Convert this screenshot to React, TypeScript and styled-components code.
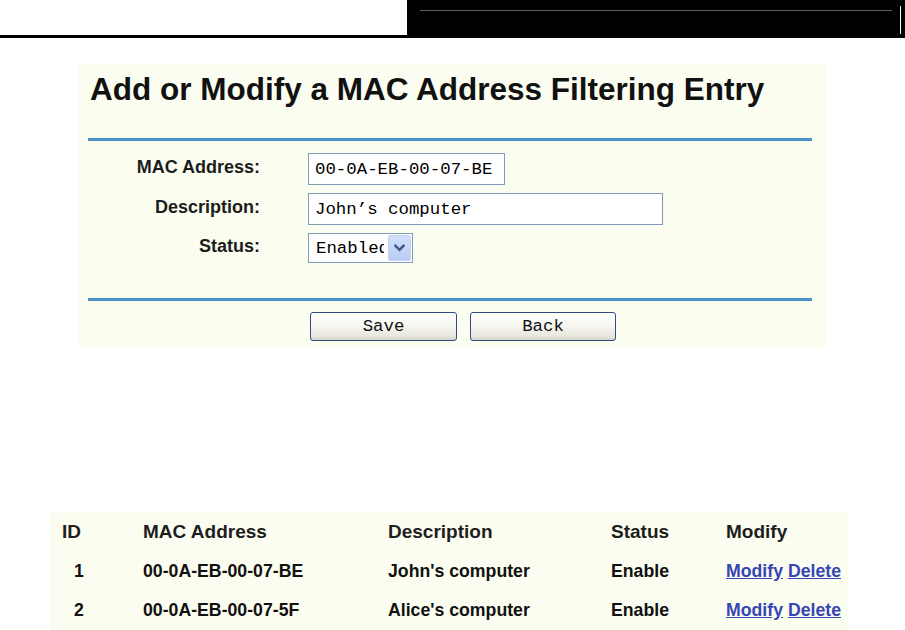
import React from "react";
import styled, { createGlobalStyle } from "styled-components";

const GlobalStyle = createGlobalStyle`
  html, body {
    margin: 0;
    padding: 0;
    background: #ffffff;
    font-family: "Liberation Sans", Arial, sans-serif;
  }
  * { box-sizing: border-box; }
`;

const CREAM = "#fbfdf0";
const BLUE = "#4a92c9";

const Page = styled.div`
  width: 905px;
  min-height: 630px;
  overflow: hidden;
`;

const Header = styled.header`
  display: flex;
  height: 38px;
`;

const HeaderLeft = styled.div`
  width: 407px;
  height: 38px;
  background: #ffffff;
  border-bottom: 3px solid #000000;
`;

const HeaderDark = styled.div`
  flex: 1;
  height: 38px;
  background: #000000;
  display: flex;
  align-items: flex-start;
  padding: 0 4px 0 13px;
`;

const HeaderRule = styled.div`
  flex: 1;
  margin-top: 10px;
  margin-right: 8px;
  border-top: 1px solid #5e5e5e;
`;

const HeaderTick = styled.div`
  width: 1px;
  height: 28px;
  margin-top: 6px;
  background: #ffffff;
`;

const FormPanel = styled.section`
  margin: 26px 0 0 78px;
  width: 748px;
  height: 284px;
  background: ${CREAM};
  padding-top: 7px;
`;

const Title = styled.h1`
  margin: 0 0 0 12px;
  font-family: "Liberation Sans", Arial, sans-serif;
  font-weight: bold;
  font-size: 31.5px;
  line-height: 36px;
  color: #111111;
`;

const Divider = styled.div<{ $mt: number }>`
  margin: ${(p) => p.$mt}px 0 0 10px;
  width: 724px;
  height: 3px;
  background: ${BLUE};
  box-shadow: 0 0 1px #9cc4e2;
`;

const FormBody = styled.div`
  display: flex;
  flex-direction: column;
  gap: 8px;
  padding-top: 12px;
`;

const Row = styled.div`
  display: flex;
  align-items: center;
`;

const Label = styled.label`
  width: 182px;
  margin-right: 48px;
  padding-bottom: 4px;
  text-align: right;
  font-weight: bold;
  font-size: 18px;
  color: #1c1c1c;
`;

const TextInput = styled.input<{ $w: number }>`
  width: ${(p) => p.$w}px;
  height: 32px;
  border: 1px solid #7f9db9;
  background: #ffffff;
  padding: 0 6px;
  font-family: "Liberation Mono", "Courier New", monospace;
  font-size: 17.4px;
  color: #000000;
  outline: none;
`;

const SelectBox = styled.div`
  width: 105px;
  height: 30px;
  border: 1px solid #7f9db9;
  background: #ffffff;
  padding: 1px;
  display: flex;
  align-items: stretch;
`;

const NativeSelect = styled.select`
  flex: 1;
  min-width: 0;
  appearance: none;
  -webkit-appearance: none;
  border: 0;
  background: transparent;
  padding: 0 4px 0 6px;
  font-family: "Liberation Mono", "Courier New", monospace;
  font-size: 17.4px;
  color: #000000;
  outline: none;
`;

const ArrowButton = styled.div`
  width: 23px;
  border-radius: 2px;
  background: linear-gradient(#d3e0fc, #b9cbf4);
  border: 1px solid #c6d4f4;
  display: flex;
  align-items: center;
  justify-content: center;
`;

const ButtonRow = styled.div`
  display: flex;
  gap: 13px;
  margin-top: 11px;
  padding-left: 232px;
`;

const Button = styled.button<{ $w: number }>`
  width: ${(p) => p.$w}px;
  height: 29px;
  border: 1px solid #2f4c7e;
  border-radius: 3px;
  background: linear-gradient(#ffffff 0%, #f7f7f2 45%, #e9e7de 85%, #d8d5c8 100%);
  font-family: "Liberation Mono", "Courier New", monospace;
  font-size: 17.4px;
  color: #111111;
  padding: 0;
`;

const TablePanel = styled.section`
  margin: 164px 0 0 50px;
  width: 798px;
  background: ${CREAM};
`;

const TableRow = styled.div<{ $h: number }>`
  display: grid;
  grid-template-columns: 81px 245px 223px 115px 1fr;
  align-items: center;
  height: ${(p) => p.$h}px;
  padding-left: 12px;
`;

const HeadCell = styled.div`
  font-weight: bold;
  font-size: 19px;
  color: #1e1e1e;
`;

const Cell = styled.div<{ $pad?: number }>`
  font-weight: bold;
  font-size: 17.7px;
  color: #111111;
  padding-left: ${(p) => p.$pad ?? 0}px;
  white-space: nowrap;
`;

const ActionLink = styled.a`
  color: #3646b4;
  text-decoration: underline;
  font-weight: bold;
  cursor: pointer;
`;

const Chevron = () => (
  <svg width="11" height="8" viewBox="0 0 11 8" aria-hidden="true">
    <path d="M1.5 1.8 L5.5 5.8 L9.5 1.8" fill="none" stroke="#3f5585" strokeWidth="2.4" strokeLinecap="square" />
  </svg>
);

const entries = [
  { id: 1, mac: "00-0A-EB-00-07-BE", desc: "John's computer", status: "Enable" },
  { id: 2, mac: "00-0A-EB-00-07-5F", desc: "Alice's computer", status: "Enable" },
];

export default function App() {
  return (
    <Page>
      <GlobalStyle />
      <Header>
        <HeaderLeft />
        <HeaderDark>
          <HeaderRule />
          <HeaderTick />
        </HeaderDark>
      </Header>

      <FormPanel>
        <Title>Add or Modify a MAC Address Filtering Entry</Title>
        <Divider $mt={31} />
        <FormBody>
          <Row>
            <Label>MAC Address:</Label>
            <TextInput $w={197} defaultValue="00-0A-EB-00-07-BE" />
          </Row>
          <Row>
            <Label>Description:</Label>
            <TextInput $w={355} defaultValue={"John\u2019s computer"} />
          </Row>
          <Row>
            <Label>Status:</Label>
            <SelectBox>
              <NativeSelect defaultValue="1">
                <option value="1">Enabled</option>
                <option value="0">Disabled</option>
              </NativeSelect>
              <ArrowButton>
                <Chevron />
              </ArrowButton>
            </SelectBox>
          </Row>
        </FormBody>
        <Divider $mt={35} />
        <ButtonRow>
          <Button $w={147}>Save</Button>
          <Button $w={146}>Back</Button>
        </ButtonRow>
      </FormPanel>

      <TablePanel>
        <TableRow $h={40}>
          <HeadCell>ID</HeadCell>
          <HeadCell>MAC Address</HeadCell>
          <HeadCell>Description</HeadCell>
          <HeadCell>Status</HeadCell>
          <HeadCell>Modify</HeadCell>
        </TableRow>
        {entries.map((e) => (
          <TableRow $h={39} key={e.id}>
            <Cell $pad={12}>{e.id}</Cell>
            <Cell>{e.mac}</Cell>
            <Cell>{e.desc}</Cell>
            <Cell>{e.status}</Cell>
            <Cell>
              <ActionLink>Modify</ActionLink> <ActionLink>Delete</ActionLink>
            </Cell>
          </TableRow>
        ))}
      </TablePanel>
    </Page>
  );
}
